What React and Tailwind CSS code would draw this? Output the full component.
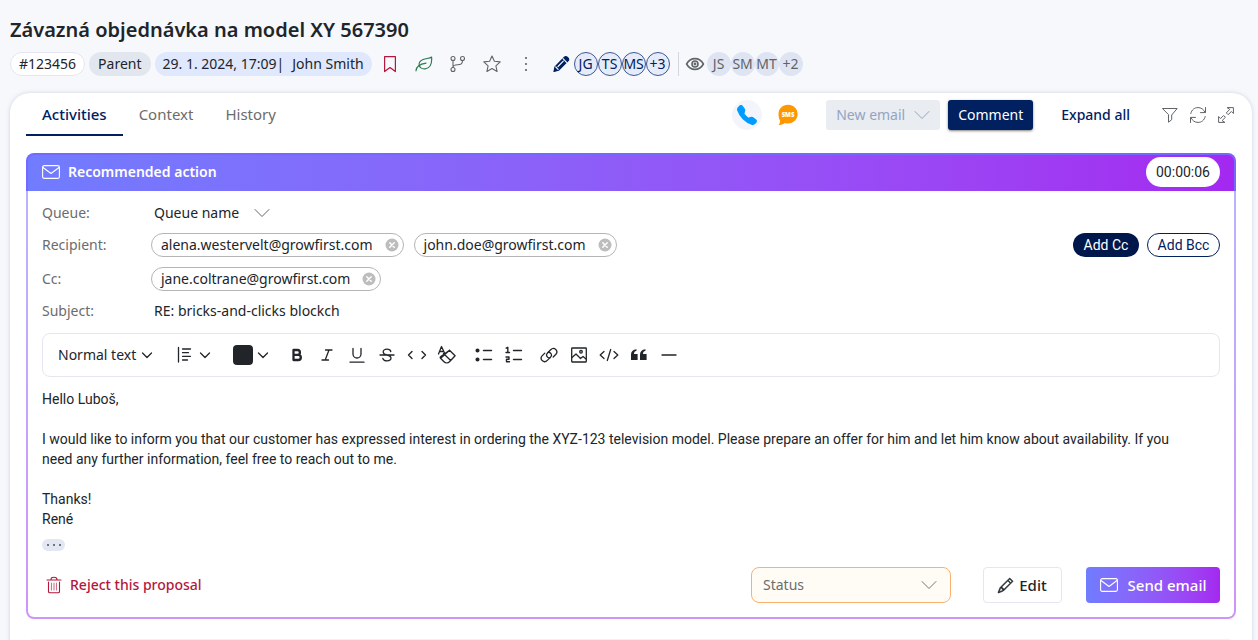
import React, { useState } from 'react'
import { BsTelephoneFill, BsPencil } from 'react-icons/bs'

function Icon({ w = 20, h = w, className = '', sw = 1, children }) {
  return (
    <svg
      width={w}
      height={h}
      viewBox={`0 0 ${w} ${h}`}
      fill="none"
      stroke="currentColor"
      strokeWidth={sw}
      strokeLinecap="round"
      strokeLinejoin="round"
      className={`shrink-0 ${className}`}
      aria-hidden="true"
    >
      {children}
    </svg>
  )
}

function Chevron({ className = '' }) {
  return (
    <Icon w={16} className={className}>
      <path d="M1 4.5l7 7 7-7" />
    </Icon>
  )
}

function SmallChevron({ className = '' }) {
  return (
    <Icon w={12} sw={1.3} className={className}>
      <path d="M1.5 4L6 8.5 10.5 4" />
    </Icon>
  )
}

function Envelope() {
  return (
    <Icon w={18} h={14} sw={1.1}>
      <rect x="0.6" y="0.6" width="16.8" height="12.8" rx="1.6" />
      <path d="M1 2.5l8 6 8-6" />
    </Icon>
  )
}

const editors = ['JG', 'TS', 'MS', '+3']
const watchers = ['JS', 'SM', 'MT', '+2']

function Header() {
  return (
    <header className="px-2.5 pt-4">
      <h1 className="text-xl leading-7 font-semibold text-[#212529]">Závazná objednávka na model XY 567390</h1>
      <div className="mt-2 flex items-center text-sm">
        <span className="flex h-6 items-center rounded-full border border-[#e6e6f2] bg-white px-2">#123456</span>
        <span className="ml-1 flex h-6 items-center rounded-full bg-[#e2e7ef] px-[9px]">Parent</span>
        <span className="ml-1 flex h-6 items-center rounded-full bg-[#dfe8fc] px-2">
          29. 1. 2024, 17:09|<span className="ml-2">John Smith</span>
        </span>
        <div className="ml-2 flex items-center gap-3.5 text-[#606468]">
          <button aria-label="Bookmark" className="flex w-5 justify-center text-[#b3173c]">
            <Icon w={14} h={18} sw={1.2}>
              <path d="M1.6 1.6h10.8v15L7 12.6l-5.4 4z" />
            </Icon>
          </button>
          <button aria-label="Eco" className="flex w-5 justify-center text-[#2e7d52]">
            <Icon w={18} sw={1.2}>
              <path d="M16.6 2C14.5 4.300 5 2.600 4.200 8.500c-.5 4.200 3 5.700 6 5.300C16.300 13 17 7 16.600 2z" />
              <path d="M1 15.800c.3-4.300 3.500-6.600 10-7.600" />
            </Icon>
          </button>
          <button aria-label="Branches" className="flex w-5 justify-center">
            <Icon w={18} sw={1.1}>
              <circle cx="4" cy="3.500" r="2" />
              <circle cx="4" cy="14.500" r="2" />
              <circle cx="13.500" cy="3.500" r="2" />
              <path d="M4 5.500v7M13.500 5.500c0 3.500-1.500 4-5 4.200-2.500.1-4.500.6-4.500 2.600" />
            </Icon>
          </button>
          <button aria-label="Favourite" className="flex w-5 justify-center">
            <Icon w={18} sw={1.1}>
              <path d="M9 1l2.400 5.300 5.800.6-4.300 3.900 1.200 5.700L9 13.600l-5.100 2.900 1.200-5.700L.8 6.900l5.800-.6z" />
            </Icon>
          </button>
          <button aria-label="More" className="flex w-5 justify-center">
            <Icon w={4} h={16}>
              <g fill="currentColor" stroke="none">
                <circle cx="2" cy="2" r="1.100" />
                <circle cx="2" cy="8" r="1.100" />
                <circle cx="2" cy="14" r="1.100" />
              </g>
            </Icon>
          </button>
        </div>
        <div className="ml-4 flex items-center text-[#00205f]">
          <Icon w={18} sw={1.2} className="mr-1">
            <path
              fill="currentColor"
              d="M12.400 2.200a2 2 0 0 1 2.800 0l.8.8a2 2 0 0 1 0 2.800L6.500 15.200 2 16.500l1-4.700z"
            />
            <path stroke="#f7f8fc" d="M6 11.500l5.300-5.300M11 3.700l3.600 3.600M3.800 12l2.300 2.300" />
          </Icon>
          {editors.map((name) => (
            <span key={name} className="flex size-6 items-center justify-center rounded-full border border-[#3c5794] bg-[#e6ebf9]">
              {name}
            </span>
          ))}
        </div>
        <div className="ml-2 flex items-center border-l border-[#d4d7df] pl-1.5 text-[#606468]">
          <Icon w={20} sw={1.600} className="mr-0.5">
            <path d="M1.600 10C3.500 6.500 6.400 4.600 10 4.600s6.500 1.900 8.400 5.400c-1.900 3.500-4.800 5.400-8.400 5.400S3.500 13.500 1.600 10z" />
            <circle cx="10" cy="10" r="3" />
            <circle cx="10" cy="10" r=".6" />
          </Icon>
          {watchers.map((name) => (
            <span key={name} className="flex size-6 items-center justify-center rounded-full bg-[#dfe4f3]">
              {name}
            </span>
          ))}
        </div>
      </div>
    </header>
  )
}

function TopBar() {
  const [tab, setTab] = useState('Activities')
  return (
    <div className="flex items-start justify-between">
      <nav className="flex">
        {['Activities', 'Context', 'History'].map((t) => (
          <button
            key={t}
            onClick={() => setTab(t)}
            className={`h-[43px] border-b-2 px-4 pt-0.5 text-[15px] ${
              t === tab ? 'border-[#00205f] font-medium text-[#00205f]' : 'border-transparent text-[#6c6c6c]'
            }`}
          >
            {t}
          </button>
        ))}
      </nav>
      <div className="mt-[7px] mr-0.5 flex items-center text-sm">
        <button
          aria-label="Call"
          className="flex size-[30px] items-center justify-center rounded-full bg-[#f3f5fb] text-[#009cff]"
        >
          <BsTelephoneFill className="size-5" />
        </button>
        <button aria-label="SMS" className="ml-4">
          <Icon w={20} h={22}>
            <path
              fill="#ff9800"
              stroke="none"
              d="M10 .8c5.500 0 9.600 4 9.600 9.300S15.500 19.500 10 19.500c-1.200 0-2.300-.2-3.300-.6C5 20.200 3 21 .6 21c.9-1 1.400-2.200 1.500-4C1.100 15.200.5 13 .5 10.100.5 4.800 4.500.8 10 .8z"
            />
            <text x="10" y="12.500" textAnchor="middle" fill="#fff" stroke="none" className="text-[6px] font-black">
              SMS
            </text>
          </Icon>
        </button>
        <button className="ml-7 flex h-[30px] w-[114px] items-center justify-between rounded-[3px] bg-[#e9edf2] px-2.5 text-[#94a3c3]">
          New email
          <Chevron />
        </button>
        <button className="ml-2 h-[30px] w-[85px] rounded-[3px] bg-[#00205f] text-white shadow-sm shadow-black/40">Comment</button>
        <button className="ml-7 font-medium text-[#00205f]">Expand all</button>
        <div className="ml-8 flex gap-3 text-[#606468]">
          <button aria-label="Filter">
            <Icon w={16}>
              <path d="M.8 1.500h14.400L9.700 8v4.700L6.500 15.200V8z" />
            </Icon>
          </button>
          <button aria-label="Refresh">
            <Icon w={16}>
              <path d="M.8 6.500C1.700 2.600 4.500.6 8 .6c3.200 0 5.600 1.600 7 4.700M15.500.5v5.100h-5" />
              <path d="M15.200 9.500c-.9 3.900-3.700 5.900-7.200 5.900-3.200 0-5.600-1.600-7-4.700M.5 15.500v-5.100h5" />
            </Icon>
          </button>
          <button aria-label="Expand">
            <Icon w={16}>
              <path d="M9.500.6h5.900v5.900l-2-2-3.300 3.200-1.800-1.800 3.200-3.300z" />
              <path d="M6.500 15.400H.6V9.500l2 2 3-3 1.800 1.800-3 3z" />
            </Icon>
          </button>
        </div>
      </div>
    </div>
  )
}

function Chip({ email }) {
  return (
    <span className="flex h-6 items-center gap-3 rounded-full border border-[#b5b5b5] pr-1 pl-[9px]">
      {email}
      <button aria-label={`Remove ${email}`}>
        <Icon w={14} sw={1.5}>
          <circle cx="7" cy="7" r="6.500" fill="#bdbdbd" stroke="none" />
          <path stroke="#fff" d="M4.800 4.800l4.400 4.400M9.200 4.800L4.800 9.200" />
        </Icon>
      </button>
    </span>
  )
}

function Fields() {
  return (
    <div className="flex flex-col gap-2.5 pt-3 text-sm">
      <div className="flex h-5 items-center">
        <label htmlFor="queue" className="w-28 text-[#6c6c6c]">Queue:</label>
        <div className="relative flex items-center">
          <select id="queue" className="appearance-none bg-transparent pr-[30px] outline-none">
            <option>Queue name</option>
          </select>
          <Chevron className="pointer-events-none absolute right-0 text-[#606468]" />
        </div>
      </div>
      <div className="flex h-6 items-center">
        <span className="w-[109px] text-[#6c6c6c]">Recipient:</span>
        <div className="flex gap-2.5">
          <Chip email="alena.westervelt@growfirst.com" />
          <Chip email="john.doe@growfirst.com" />
        </div>
        <div className="ml-auto flex gap-2 font-[Roboto,sans-serif]">
          <button className="h-6 w-[66px] rounded-full bg-[#00174b] text-white">Add Cc</button>
          <button className="h-6 w-[73px] rounded-full border border-[#00205f] text-[#00205f]">Add Bcc</button>
        </div>
      </div>
      <div className="flex h-6 items-center">
        <span className="w-[109px] text-[#6c6c6c]">Cc:</span>
        <Chip email="jane.coltrane@growfirst.com" />
      </div>
      <div className="flex h-5 items-center">
        <label htmlFor="subject" className="w-28 text-[#6c6c6c]">Subject:</label>
        <input id="subject" defaultValue="RE: bricks-and-clicks blockch" className="flex-1 bg-transparent outline-none" />
      </div>
    </div>
  )
}

function Tool({ label, children, sw = 1.300 }) {
  return (
    <button aria-label={label} className="flex h-[30px] w-[30px] items-center justify-center">
      <Icon w={20} sw={sw}>{children}</Icon>
    </button>
  )
}

function Toolbar() {
  return (
    <div className="mt-3 flex h-11 items-center rounded-lg border border-[#e6e6f2] px-[15px] text-sm text-[#212529]">
      <div className="relative flex items-center">
        <select aria-label="Text style" className="appearance-none bg-transparent pr-4 outline-none">
          <option>Normal text</option>
        </select>
        <SmallChevron className="pointer-events-none absolute right-0" />
      </div>
      <button aria-label="Alignment" className="ml-[22px] flex items-center gap-1">
        <Icon w={20} sw={1.300}>
          <path d="M3.500 2.500v14.500M7.500 4h8M7.500 7.700h6M7.500 11.300h8M7.500 15h5" />
        </Icon>
        <SmallChevron />
      </button>
      <button aria-label="Text color" className="ml-[22px] flex items-center gap-1">
        <span className="size-5 rounded bg-[#212529]" />
        <SmallChevron />
      </button>
      <div className="ml-[13px] flex">
        <Tool label="Bold" sw={2.300}>
          <path d="M6.500 5h4a2.300 2.300 0 0 1 0 4.800h-4zM6.500 9.800h4.700a2.500 2.500 0 0 1 0 5.200H6.500z" />
        </Tool>
        <Tool label="Italic">
          <path d="M8.500 5h6.500M5 15h6.500M12 5L8.200 15" />
        </Tool>
        <Tool label="Underline">
          <path d="M6 3.500v5.500a4 4 0 0 0 8 0V3.500M3 17.200h14" />
        </Tool>
        <Tool label="Strikethrough">
          <path d="M13.800 6.500C13.500 5 12 4.200 10 4.200c-2.300 0-3.800 1.100-3.800 2.700C6.200 9 8 9.500 10 10s4 1.200 4 3.100c0 1.700-1.600 2.800-4 2.800-2.200 0-3.800-1-4.200-2.600M3 10h14" />
        </Tool>
        <Tool label="Code" sw={1.400}>
          <path d="M5 6.500L1.500 10 5 13.500M15 6.500l3.500 3.500-3.500 3.500" />
        </Tool>
        <Tool label="Clear formatting">
          <path d="M1.500 9L4.500 1.500 7.500 8M2.600 6.500h4" />
          <path d="M12.500 5.200l5.600 5.600-5.600 5.900c-1.500 1.500-4 1.500-5.500 0l-3.500-3.500c-.5-.5-.5-1 0-1.500zM6.500 8.500l7.200 7M12.500 5.200L4.500 12.500" />
        </Tool>
      </div>
      <div className="ml-[7px] flex">
        <Tool label="Bullet list" sw={1.500}>
          <circle cx="3.500" cy="5.500" r="1.300" fill="currentColor" />
          <circle cx="3.500" cy="14.500" r="1.300" fill="currentColor" />
          <path d="M9.500 5.500h8M9.500 14.500h8" />
        </Tool>
        <Tool label="Numbered list" sw={1.400}>
          <path d="M2.200 3.200l1.600-.9v5M2 7.500h3.500M2 12h3v2.200H2.500v2.600h3M9.500 5.500h8M9.500 14.500h8" />
        </Tool>
      </div>
      <div className="ml-[5px] flex">
        <Tool label="Link">
          <path d="M11 12.800c-1.600.3-3.500-1-3.500-2.700 0-1 .5-1.700 1.200-2.400l3-3c1.500-1.500 3.700-1.500 5.100-.2 1.400 1.400 1.300 3.500-.1 5l-2.500 2.500" />
          <path d="M9.200 7.300c1.600-.3 3.300 1 3.300 2.700 0 1-.5 1.700-1.200 2.400l-3 3c-1.500 1.500-3.700 1.500-5.100.2-1.400-1.400-1.300-3.500.1-5l2.500-2.500" />
        </Tool>
        <Tool label="Image">
          <rect x="2.700" y="3" width="14.600" height="14" rx=".5" />
          <circle cx="12" cy="6.800" r="1.300" />
          <path d="M3 12.500l4-3.500 4.500 4.500 2.500-2 3 2.500" />
        </Tool>
        <Tool label="Source">
          <path d="M5 6.500L1.200 10 5 13.500M15 6.500l3.800 3.500-3.800 3.500M11.700 4.500l-3.400 11" />
        </Tool>
        <Tool label="Quote">
          <g fill="currentColor" stroke="none">
            <path d="M2 15V9.500C2 6.500 3.800 4.700 7.500 4.300v1.500C5.800 6.200 5 7.200 5 9h3.600v6z" />
            <path d="M11 15V9.500c0-3 1.800-4.800 5.500-5.200v1.500C14.800 6.200 14 7.200 14 9h3.600v6z" />
          </g>
        </Tool>
        <Tool label="Horizontal line">
          <path d="M3 10h14" />
        </Tool>
      </div>
    </div>
  )
}

function Message() {
  return (
    <div className="mt-3 pr-5 font-[Roboto,sans-serif] text-sm leading-5">
      <p>Hello Luboš,</p>
      <p className="mt-5">
        I would like to inform you that our customer has expressed interest in ordering the XYZ-123 television model. Please
        prepare an offer for him and let him know about availability. If you need any further information, feel free to reach
        out to me.
      </p>
      <p className="mt-5">
        Thanks!
        <br />
        René
      </p>
      <button aria-label="Show quoted text" className="mt-2.5 flex h-3 w-[23px] items-center justify-center rounded-full bg-[#e2e7f3]">
        <Icon w={18} h={4}>
          <g fill="#4b4f55" stroke="none">
            <circle cx="3" cy="2" r="1" />
            <circle cx="9" cy="2" r="1" />
            <circle cx="15" cy="2" r="1" />
          </g>
        </Icon>
      </button>
    </div>
  )
}

function Actions() {
  return (
    <div className="mt-4 flex items-center pb-3.5 text-[15px]">
      <button className="ml-1 flex items-center gap-2 text-sm font-medium text-[#b3173c]">
        <Icon w={16} h={18} sw={1.100}>
          <path d="M1 4h14M5 3.500c0-1.600.8-2.300 3-2.300s3 .7 3 2.300M2.500 6v9.500c0 .8.500 1.300 1.300 1.300h8.400c.8 0 1.300-.5 1.300-1.300V6" />
          <path strokeOpacity=".6" d="M5.500 7v7M8 7v7M10.500 7v7" />
        </Icon>
        Reject this proposal
      </button>
      <div className="relative ml-auto flex items-center">
        <select
          aria-label="Status"
          className="h-9 w-[200px] appearance-none rounded-lg border border-[#f9b170] bg-[#fffcf5] px-[11px] text-sm text-[#6c6c6c] outline-none"
        >
          <option>Status</option>
        </select>
        <Chevron className="pointer-events-none absolute right-3.5 text-[#77736e]" />
      </div>
      <button className="ml-8 flex h-9 w-[79px] items-center justify-center gap-1.5 rounded border border-[#e6e6f2] font-medium">
        <BsPencil className="size-[15px] overflow-visible" stroke="currentColor" strokeWidth="0.6" />
        Edit
      </button>
      <button className="ml-6 flex h-9 w-[134px] items-center justify-center gap-2.5 rounded bg-linear-to-r from-[#707cff] to-[#a428f0] font-medium text-white">
        <Envelope />
        Send email
      </button>
    </div>
  )
}

export default function App() {
  return (
    <div className="flex h-screen flex-col overflow-hidden bg-[#f7f8fc] font-['Noto_Sans',sans-serif] text-[#212529]">
      <Header />
      <main className="mt-[17px] mr-1.5 ml-2.5 flex-1 rounded-t-[20px] bg-white px-4 shadow-[0_0_4px_rgba(120,130,170,0.3)]">
        <TopBar />
        <section className="mt-[17px] rounded-lg bg-[linear-gradient(180deg,#7468ff_38px,#b9b3ff_38px,#cf94f9)] p-0.5">
          <div className="flex h-9 items-center gap-2 rounded-t-md bg-linear-to-r from-[#707cff] to-[#a428f0] px-3.5 pb-0.5 text-sm font-semibold text-white">
            <Envelope />
            <h2>Recommended action</h2>
            <time className="ml-auto flex h-[30px] items-center rounded-full bg-white px-2.5 font-[Roboto,sans-serif] font-normal text-[#212529]">
              00:00:06
            </time>
          </div>
          <div className="rounded-b-md bg-white px-3.5">
            <Fields />
            <Toolbar />
            <Message />
            <Actions />
          </div>
        </section>
        <section className="mt-5 h-10 rounded-lg border border-[#f0f1f5]" />
      </main>
    </div>
  )
}
